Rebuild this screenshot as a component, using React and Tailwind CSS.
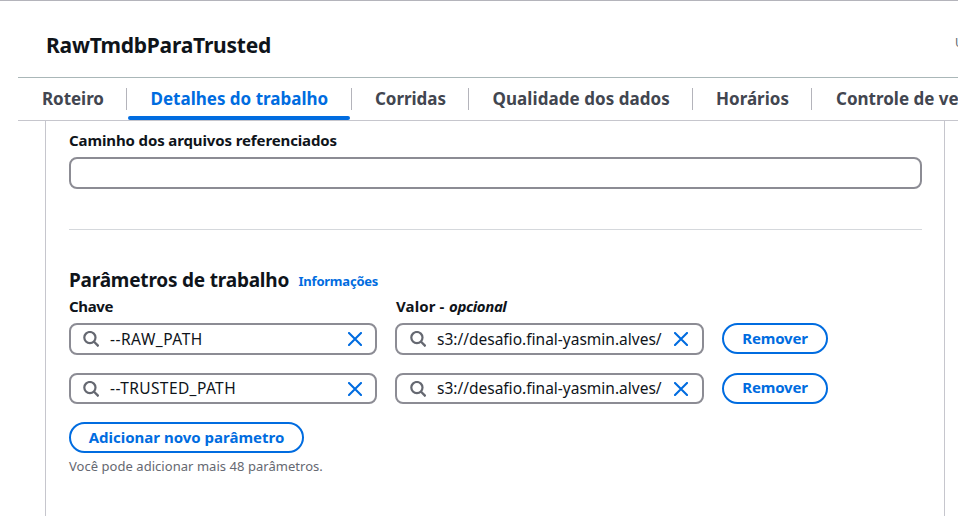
import React from "react";

const tabs = [
  { label: "Roteiro", width: "w-[109px]", pad: "pl-6 tracking-[-0.05px]" },
  { label: "Detalhes do trabalho", width: "w-[225px]", pad: "pl-[23.5px]", active: true },
  { label: "Corridas", width: "w-[117px]", pad: "pl-[23px] tracking-[-0.05px]" },
  { label: "Qualidade dos dados", width: "w-[224px]", pad: "pl-[23.5px] tracking-[0.06px]" },
  { label: "Horários", width: "w-[119px]", pad: "pl-[23px]" },
  { label: "Controle de versão", width: "w-[220px]", pad: "pl-6" },
];

const params = [
  { name: "--RAW_PATH", spacing: "tracking-[0.5px]", height: "h-8", lift: "", pillLift: "pb-px", value: "s3://desafio.final-yasmin.alves/" },
  { name: "--TRUSTED_PATH", spacing: "tracking-[0.4px]", height: "h-[31px]", lift: "pb-px", pillLift: "pb-[3px]", value: "s3://desafio.final-yasmin.alves/" },
];

function SearchIcon() {
  return (
    <svg className="h-4 w-4 shrink-0" viewBox="0 0 16 16" fill="none" stroke="#656871" strokeWidth="2.2">
      <circle cx="6.9" cy="6.6" r="5.6" />
      <path d="M10.8 10.5 15.6 15.3" strokeWidth="2.4" />
    </svg>
  );
}

function CloseIcon() {
  return (
    <svg className="h-[14px] w-[14px] shrink-0" viewBox="0 0 14 14" fill="none" stroke="#006ce0" strokeWidth="2.1" strokeLinecap="round">
      <path d="M1 1 13 13M13 1 1 13" />
    </svg>
  );
}

function Field({ text, width, height, spacing, lift, pad }) {
  return (
    <div className={`flex shrink-0 items-center rounded-lg border-2 border-[#8c8c94] ${pad} ${width} ${height}`}>
      <SearchIcon />
      <span className={`ml-[11px] flex-1 whitespace-nowrap text-[15.5px] leading-5 text-[#0f141a] ${lift} ${spacing}`}>{text}</span>
      <CloseIcon />
    </div>
  );
}

function Pill({ children, size, spacing }) {
  return (
    <button className={`flex h-[31px] shrink-0 items-center justify-center rounded-full border-2 border-[#006ce0] text-[15px] leading-5 font-bold whitespace-nowrap text-[#006ce0] ${size} ${spacing}`}>
      {children}
    </button>
  );
}

export default function App() {
  return (
    <div className="flex h-[516px] w-[958px] flex-col overflow-hidden border-t border-[#b4b4bb] bg-white font-['Noto_Sans','Open_Sans',sans-serif] text-[#0f141a]">
      <header className="ml-[18px] flex h-[77px] shrink-0 items-start justify-between border-b border-[#aab7b8] pl-7">
        <h1 className="mt-[30px] text-[21px] leading-7 font-bold tracking-[-0.23px]">RawTmdbParaTrusted</h1>
        <span className="mt-[34px] w-[3px] overflow-hidden text-xs leading-4 text-[#656871]">Última</span>
      </header>

      <nav className="ml-[18px] flex h-[43px] shrink-0 overflow-hidden border-b border-[#c6c6cd]">
        {tabs.map((tab) => (
          <div key={tab.label} className={`flex shrink-0 flex-col justify-between ${tab.width}`}>
            <div className={`mt-[10px] flex h-[22px] items-center border-r border-[#b4b4bb] text-[17px] leading-[22px] font-bold whitespace-nowrap ${tab.pad} ${tab.active ? "text-[#006ce0]" : "text-[#424650]"}`}>
              {tab.label}
            </div>
            {tab.active && <div className="mr-[2px] ml-px h-1 rounded-sm bg-[#006ce0]" />}
          </div>
        ))}
      </nav>

      <main className="mr-[13px] ml-[45px] flex flex-1 flex-col items-start border-x border-[#c6c6cd] pr-[22px] pl-[23px]">
        <label className="mt-[9px] text-[15px] leading-5 font-bold tracking-[-0.12px]">Caminho dos arquivos referenciados</label>
        <div className="mt-[7px] h-8 w-full rounded-lg border-2 border-[#8c8c94]" />
        <div className="mt-10 w-full border-t border-[#d5d8dc]" />

        <div className="mt-[38px] flex h-6 items-start">
          <h2 className="w-[229.5px] text-[19px] leading-6 font-bold tracking-[-0.2px] whitespace-nowrap">Parâmetros de trabalho</h2>
          <a className="mt-[3px] text-[13px] leading-5 font-bold tracking-[-0.22px] text-[#006ce0]">Informações</a>
        </div>

        <div className="mt-1 flex text-[15px] leading-5 font-bold">
          <span className="w-[327px] tracking-[-0.35px]">Chave</span>
          <span className="w-[53px] tracking-[0.1px]">Valor -</span>
          <em className="tracking-[-0.4px]">opcional</em>
        </div>

        <div className="mt-[7px] flex flex-col gap-[18px]">
          {params.map((p) => (
            <div key={p.name} className="flex items-start gap-[18px]">
              <Field text={p.name} width="w-[308px]" height={p.height} spacing={p.spacing} lift={p.lift} pad="pr-[13px] pl-3" />
              <Field text={p.value} width="w-[309px]" height={p.height} spacing="tracking-normal" lift={p.lift} pad="pr-[14px] pl-[13px]" />
              <Pill size={`w-[106px] ${p.pillLift}`} spacing="tracking-[-0.18px]">Remover</Pill>
            </div>
          ))}
        </div>

        <div className="mt-[18px]">
          <Pill size="w-[235px] pb-[2px]" spacing="tracking-normal">Adicionar novo parâmetro</Pill>
        </div>
        <p className="mt-[3px] text-[13px] leading-5 tracking-[0.04px] text-[#656871]">Você pode adicionar mais 48 parâmetros.</p>
      </main>
    </div>
  );
}
